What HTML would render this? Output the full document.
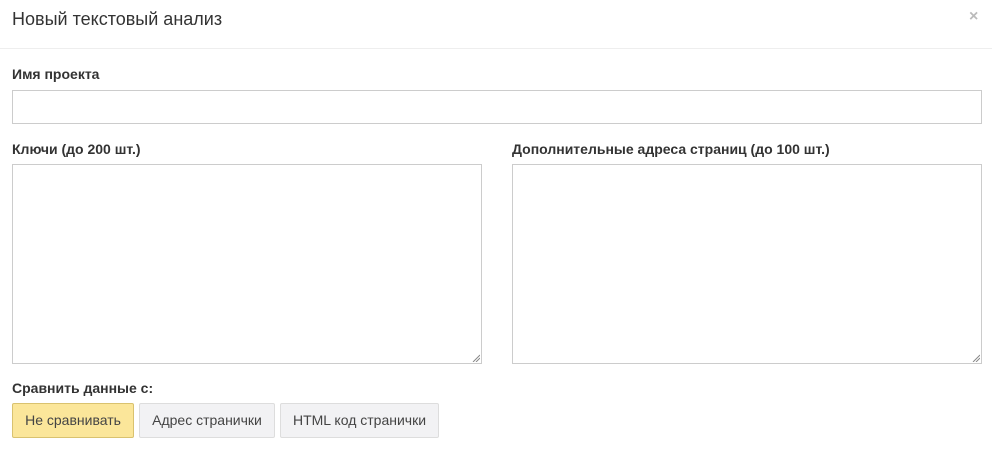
<!DOCTYPE html>
<html><head><meta charset="utf-8"><style>
body{margin:0;width:992px;height:450px;background:#fff;font-family:"Liberation Sans",sans-serif;color:#333;position:relative;overflow:hidden}
.a{position:absolute}
.t{left:12px;top:9px;font-size:18px;color:#333}
.x{left:969px;top:8px;font-size:16px;color:#bbb;font-weight:bold}
.hr{left:0;top:48px;width:992px;height:1px;background:#eee}
.l{font-size:14px;font-weight:bold;color:#333}
.box{border:1px solid #ccc;box-sizing:border-box;background:#fff}
.b{top:403px;height:35px;box-sizing:border-box;border:1px solid #ddd;border-radius:2px;background:#f2f2f4;font-size:14px;color:#444;text-align:center;line-height:33px}
.g{position:absolute;right:1px;bottom:1px;width:8px;height:8px}
</style></head><body>
<div class="a t">Новый текстовый анализ</div>
<div class="a x">×</div>
<div class="a hr"></div>
<div class="a l" style="left:12px;top:66px">Имя проекта</div>
<div class="a box" style="left:12px;top:90px;width:970px;height:34px"></div>
<div class="a l" style="left:12px;top:141px">Ключи (до 200 шт.)</div>
<div class="a l" style="left:512px;top:141px">Дополнительные адреса страниц (до 100 шт.)</div>
<div class="a box" style="left:12px;top:164px;width:470px;height:200px"><svg class="g" viewBox="0 0 8 8"><path d="M1 8L8 1M4 8L8 4" stroke="#888"/></svg></div>
<div class="a box" style="left:512px;top:164px;width:470px;height:200px"><svg class="g" viewBox="0 0 8 8"><path d="M1 8L8 1M4 8L8 4" stroke="#888"/></svg></div>
<div class="a l" style="left:12px;top:380px">Сравнить данные с:</div>
<div class="a b" style="left:12px;width:122px;background:#fbe69a;border-color:#d9c26f">Не сравнивать</div>
<div class="a b" style="left:139px;width:136px">Адрес странички</div>
<div class="a b" style="left:280px;width:159px">HTML код странички</div>
</body></html>
